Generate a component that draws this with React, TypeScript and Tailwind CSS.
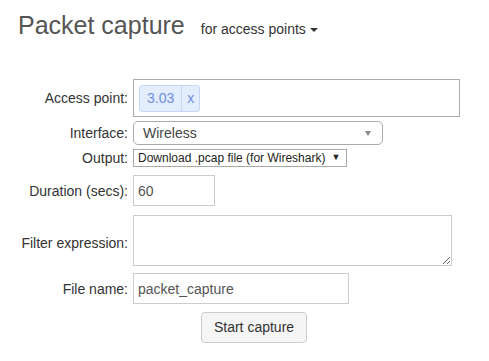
import React from "react";

const font = { fontFamily: '"Liberation Sans", Arial, sans-serif' };

function Row({
  label,
  children,
  className = "",
  labelClass = "",
}: {
  label: string;
  children: React.ReactNode;
  className?: string;
  labelClass?: string;
}) {
  return (
    <div className={"flex items-center " + className}>
      <div className={"w-[128px] text-right text-[14px] leading-[16px] text-[#333] " + labelClass}>{label}</div>
      <div className="ml-[5px]">{children}</div>
    </div>
  );
}

export default function App() {
  return (
    <div className="w-[489px] h-[361px] bg-white text-[#333]" style={font}>
      <div className="flex items-baseline pt-[13px] pl-[18px]">
        <h1 className="text-[25px] leading-[24px] text-[#555] font-normal">Packet capture</h1>
        <div className="ml-[16px] flex items-center text-[14px] leading-[16px] text-[#333]">
          <span>for access points</span>
          <span className="ml-[4px] mt-[2px] inline-block w-0 h-0 border-l-[4px] border-r-[4px] border-t-[4px] border-l-transparent border-r-transparent border-t-[#333]"></span>
        </div>
      </div>

      <div className="mt-[42px] flex flex-col">
        <Row label="Access point:">
          <div className="w-[327px] h-[38px] border border-[#aaa] bg-white pl-[5px] pt-[5px]">
            <div className="inline-flex h-[27px] border border-[#c5d6f6] bg-[#e4edfd] rounded-[3px] text-[14px] text-[#6f8ee2]">
              <span className="flex items-center px-[7px] border-r border-[#c5d6f6]">3.03</span>
              <span className="flex items-center px-[5px]">x</span>
            </div>
          </div>
        </Row>
        <Row label="Interface:" className="mt-[4px]">
          <div className="w-[250px] h-[24px] border border-[#aaa] rounded-[5px] bg-white flex items-center pl-[9px] pr-[11px] text-[14px] text-[#444]">
            <span className="flex-1 pt-[1px]">Wireless</span>
            <span className="inline-block w-0 h-0 border-l-[3.5px] border-r-[3.5px] border-t-[5px] border-l-transparent border-r-transparent border-t-[#888]"></span>
          </div>
        </Row>
        <Row label="Output:" className="mt-[4px]">
          <div className="w-[214px] h-[18px] border border-[#a9a9a9] bg-white flex items-center pl-[4px] text-[12px] text-[#222]">
            <span>Download .pcap file (for Wireshark)</span>
            <span className="ml-[6px] text-[9px]">▼</span>
          </div>
        </Row>
        <Row label="Duration (secs):" className="mt-[8px]">
          <input
            readOnly
            value="60"
            className="block w-[82px] h-[31px] border border-[#ccc] px-[4px] text-[14px] text-[#555] outline-none"
            style={font}
          />
        </Row>
        <Row label="Filter expression:" className="mt-[9px]" labelClass="pt-[5px]">
          <textarea
            readOnly
            className="block w-[319px] h-[51px] border border-[#ccc] text-[14px] outline-none"
            style={font}
          />
        </Row>
        <Row label="File name:" className="mt-[7px]">
          <input
            readOnly
            value="packet_capture"
            className="block w-[216px] h-[31px] border border-[#ccc] px-[4px] text-[14px] text-[#555] outline-none"
            style={font}
          />
        </Row>
        <div className="mt-[8px] pl-[201px]">
          <button
            className="w-[106px] h-[31px] border border-[#ccc] rounded-[4px] bg-[#f5f5f5] text-[14px] text-[#333]"
            style={font}
          >
            Start capture
          </button>
        </div>
      </div>
    </div>
  );
}
